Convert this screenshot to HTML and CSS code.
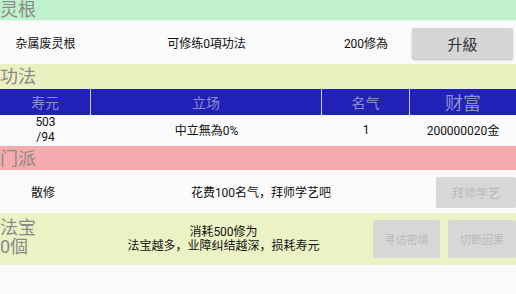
FILE: index.html
```html
<!DOCTYPE html>
<html>
<head>
<meta charset="utf-8">
<link rel="stylesheet" href="styles.css">
</head>
<body>
<div class="page">
  <div class="title green">灵根</div>
  <div class="row grid4 h44">
    <div class="cell">杂属废灵根</div>
    <div class="cell">可修练0項功法</div>
    <div class="cell">200修為</div>
    <div class="cell btn-cell"><button class="btn raised">升級</button></div>
  </div>
  <div class="title yellow">功法</div>
  <div class="thead grid4">
    <div class="th">寿元</div>
    <div class="th">立场</div>
    <div class="th">名气</div>
    <div class="th big">财富</div>
  </div>
  <div class="row grid4 h33">
    <div class="cell stack">503<br>/94</div>
    <div class="cell">中立無為0%</div>
    <div class="cell">1</div>
    <div class="cell">200000020金</div>
  </div>
  <div class="title pink">门派</div>
  <div class="row sect">
    <div class="cell">散修</div>
    <div class="cell">花费100名气，拜师学艺吧</div>
    <div class="cell"><button class="btn flat wide">拜师学艺</button></div>
  </div>
  <div class="treasure">
    <div class="tlabel">法宝<br>0個</div>
    <div class="cell stack small">消耗500修为<br>法宝越多，业障纠结越深，损耗寿元</div>
    <div class="tbtns">
      <button class="btn flat tall">寻访密境</button>
      <button class="btn flat tall">切断因果</button>
    </div>
  </div>
</div>
</body>
</html>
```
FILE: styles.css
```css
html, body {
  margin: 0;
  padding: 0;
  background: #fafafa;
}
body {
  font-family: Roboto, "Noto Sans CJK SC", sans-serif;
  color: #111;
  font-size: 12px;
}
.page {
  width: 516px;
  overflow: hidden;
}
.title {
  font-size: 18px;
  color: #8a8a8a;
  padding-left: 0;
  white-space: nowrap;
}
.green {
  height: 20px;
  line-height: 20px;
  background: #bff1cd;
  border-bottom: 1px solid #e6f7ea;
}
.yellow {
  height: 24px;
  line-height: 26px;
  background: #ebf0c0;
}
.pink {
  height: 24px;
  line-height: 26px;
  background: #f5aaae;
}
.grid4 {
  display: grid;
  grid-template-columns: 91px 231px 88px 106px;
}
.row .cell,
.cell {
  display: flex;
  align-items: center;
  justify-content: center;
  text-align: center;
}
.h44 {
  height: 43px;
}
.h33 {
  height: 33px;
}
.stack {
  line-height: 15px;
}
.thead {
  height: 24px;
  border-top: 1px solid #e8ebe0;
  background: #c8c8ec;
  column-gap: 1px;
  grid-template-columns: 90px 230px 87px 106px;
}
.th {
  background: #2121b7;
  color: #8d8dd2;
  font-size: 14px;
  display: flex;
  align-items: center;
  justify-content: center;
}
.th.big {
  font-size: 18px;
}
.btn {
  font-family: Roboto, "Noto Sans CJK SC", sans-serif;
  border: none;
  border-radius: 2px;
  background: #d6d6d6;
  padding: 0;
  cursor: default;
}
.btn-cell {
  justify-content: flex-end;
}
.raised {
  width: 101px;
  height: 31px;
  margin-right: 1px;
  margin-top: 1px;
  font-size: 15px;
  color: #333;
  box-shadow: 0 1px 2px rgba(0,0,0,0.25);
}
.flat {
  color: #b8b8b8;
  background: #d8d8d8;
}
.sect {
  display: grid;
  grid-template-columns: 86px 350px 80px;
  height: 43px;
}
.wide {
  width: 80px;
  height: 31px;
  font-size: 12px;
  margin-top: 1px;
}
.treasure {
  display: grid;
  grid-template-columns: 80px 287px 149px;
  height: 52px;
  background: #ebf2c3;
}
.tlabel {
  font-size: 18px;
  line-height: 19px;
  color: #8a8a8a;
  padding-top: 5px;
}
.small {
  font-size: 12px;
  line-height: 14px;
}
.tbtns {
  display: flex;
  gap: 8px;
  align-items: flex-start;
  padding-top: 7px;
  padding-left: 6px;
}
.tall {
  width: 67px;
  height: 38px;
  font-size: 11px;
}
.tall + .tall {
  width: 68px;
}
```
